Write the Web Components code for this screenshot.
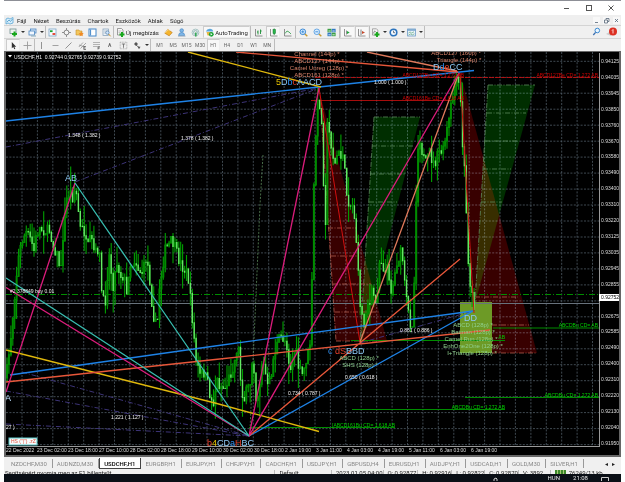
<!DOCTYPE html>
<html lang="hu">
<head>
<meta charset="utf-8">
<title>USDCHF,H1</title>
<style>
  html, body { height: 100%; margin: 0; background: #fff; }
  body { font-family: Roboto, "Liberation Sans", sans-serif; font-size: 6px; overflow: hidden; }
</style>
</head>
<body>
<trading-app></trading-app>

<script>
const define = (name, html, setup) => {
  const tpl = document.createElement('template');
  tpl.innerHTML = html;
  customElements.define(name, class extends HTMLElement {
    constructor() {
      super();
      this.attachShadow({ mode: 'open' }).append(tpl.content.cloneNode(true));
    }
    connectedCallback() {
      if (setup && !this.ready) { this.ready = true; setup(this, this.shadowRoot); }
    }
  });
};

/* Icons: 9x9 drawings */
const ICONS = {
  newchart: '<rect x="1" y="1" width="6" height="4.5" fill="#eef4ee" stroke="#6f8f8f" stroke-width=".8"/><path d="M5.5 3.5v5M3 6h5" stroke="#18a81c" stroke-width="2"/>',
  profiles: '<rect x="2.5" y="1" width="5.5" height="4" fill="#d8e8f8" stroke="#4b86c0" stroke-width=".8"/><rect x="1" y="3" width="5.5" height="4" fill="#f2f8ff" stroke="#4b86c0" stroke-width=".8"/><path d="M3 8h5" stroke="#8ab" stroke-width="1"/>',
  market: '<rect x="1" y="1" width="7" height="7" fill="#f8fcff" stroke="#79a5c8" stroke-width=".8"/><path d="M2 3.2h2.6" stroke="#15a52a" stroke-width="1.8"/><path d="M4.5 6h2.8" stroke="#e13a24" stroke-width="1.8"/>',
  cross: '<path d="M4.5 0v9M0 4.5h9" stroke="#888" stroke-width=".9"/><circle cx="4.5" cy="4.5" r="2.4" fill="#f4f4f4" stroke="#777" stroke-width=".9"/>',
  nav: '<path d="M1 2h3l.6 1H7v4H1z" fill="#f3c75d" stroke="#c89028" stroke-width=".6"/><path d="M6.2 3.5l.8 1.6 1.7.2-1.2 1.2.3 1.8-1.6-.9-1.6.9.3-1.8-1.2-1.2 1.7-.2z" fill="#f08a24"/>',
  terminal: '<rect x="1" y="1" width="7" height="7" fill="#fff" stroke="#4386c8" stroke-width="1"/><path d="M2.6 1.5v6" stroke="#4386c8" stroke-width="1"/>',
  tester: '<rect x="1" y="1" width="5.6" height="6.6" fill="#eef4fa" stroke="#7d9ab5" stroke-width=".7"/><path d="M2 3h3.500M2 5h2" stroke="#9ab" stroke-width=".6"/><circle cx="5.4" cy="4.6" r="1.7" fill="#cfe6ff" stroke="#5580a8" stroke-width=".7"/><path d="M6.600 6l2 2.300" stroke="#c89028" stroke-width="1"/>',
  order: '<path d="M1.500 .5h4l1.500 1.500v5h-5.500z" fill="#f8f8f8" stroke="#777" stroke-width=".7"/><path d="M2.500 3h3M2.500 4.600h2" stroke="#999" stroke-width=".6"/><path d="M6 4v5M3.500 6.500h5" stroke="#18a81c" stroke-width="2"/>',
  gold: '<path d="M.8 5.200l3-3.700 4.400 3-3 3.300z" fill="#f5b52e" stroke="#c27a12" stroke-width=".7"/><path d="M1.200 5l3-3.200 1.600 1" stroke="#ffe08a" fill="none" stroke-width=".8"/>',
  person: '<circle cx="4.700" cy="2.500" r="1.800" fill="#7eb6e8" stroke="#3d7fc0" stroke-width=".6"/><path d="M1.500 7.500q.3-3 3.200-3t3 3z" fill="#7eb6e8" stroke="#3d7fc0" stroke-width=".6"/><path d="M1 8.200h7.500" stroke="#9ab" stroke-width=".8"/>',
  signal: '<circle cx="4.500" cy="4.500" r="3.400" fill="none" stroke="#a8c4c4" stroke-width="1"/><circle cx="4.500" cy="4.500" r="1.900" fill="none" stroke="#7aa" stroke-width=".8"/><path d="M4.800 4.500v4" stroke="#2aa54a" stroke-width="1.400"/>',
  auto: '<path d="M.8 3.500q1-2.700 4-2.700t3.400 2.700z" fill="#5aa7dc"/><path d="M1.500 4h5.500l-1 3.500H2.500z" fill="#e7b743"/><circle cx="6.300" cy="6.300" r="2.400" fill="#17a336"/><path d="M5.600 5.100l1.900 1.200-1.900 1.200z" fill="#fff"/>',
  bars: '<path d="M1.500 1v7h7" fill="none" stroke="#777" stroke-width=".8"/><path d="M4 2.500v4M3 4h1M6.500 1.500v4.500M6.500 3h1.200" stroke="#1b8f35" stroke-width=".9"/>',
  candles: '<path d="M1.500 1v7h7" fill="none" stroke="#777" stroke-width=".8"/><path d="M5.200 .5v6.500" stroke="#0d7a2a" stroke-width=".8"/><rect x="4" y="1.600" width="2.500" height="4" fill="#29b64a" stroke="#0d7a2a" stroke-width=".5"/>',
  line: '<path d="M1.500 1v7h7" fill="none" stroke="#777" stroke-width=".8"/><path d="M2 5.500l2-2.500 2 1 2 2" fill="none" stroke="#2a9a45" stroke-width=".8"/>',
  zin: '<path d="M5.500 5.500L8.300 8.300" stroke="#c89a30" stroke-width="1.400"/><circle cx="3.800" cy="3.800" r="2.800" fill="#d7ecff" stroke="#2b7fd0" stroke-width=".9"/><path d="M3.800 2.300v3M2.300 3.800h3" stroke="#2b7fd0" stroke-width=".8"/>',
  zout: '<path d="M5.500 5.500L8.300 8.300" stroke="#c89a30" stroke-width="1.400"/><circle cx="3.800" cy="3.800" r="2.800" fill="#d7ecff" stroke="#5b9fe0" stroke-width=".9"/><path d="M2.300 3.800h3" stroke="#2b7fd0" stroke-width=".8"/>',
  tile: '<rect x=".5" y=".8" width="3.900" height="3.500" fill="#3a9f43"/><rect x="4.700" y=".8" width="3.900" height="3.500" fill="#2f78c4"/><rect x=".5" y="4.700" width="3.900" height="3.500" fill="#2f78c4"/><rect x="4.700" y="4.700" width="3.900" height="3.500" fill="#3a9f43"/><path d="M1.400 3h2.300M5.400 3h2.300M1.400 6.800h2.300M5.400 6.800h2.300" stroke="#fff" stroke-width=".8"/>',
  scroll: '<path d="M1.500 1v7h7" fill="none" stroke="#777" stroke-width=".8"/><path d="M3.500 2.500v4" stroke="#666" stroke-width=".7"/><path d="M4 3l2.700 1.500L4 6z" fill="#22a53c"/>',
  shift: '<path d="M1.500 1v7h7" fill="none" stroke="#777" stroke-width=".8"/><path d="M4 1.500v5.500" stroke="#666" stroke-width=".8"/><path d="M5 3l3 1.500-3 1.500z" fill="#c64a2d"/>',
  indi: '<path d="M1.500 .8h4l1.300 1.300v5h-5.300z" fill="#f4f4f4" stroke="#888" stroke-width=".7"/><path d="M2.300 5.500l1.300-2.500 1.300 1" fill="none" stroke="#555" stroke-width=".6"/><path d="M6 4v5M3.500 6.500h5" stroke="#18a81c" stroke-width="1.900"/>',
  clock: '<circle cx="4.500" cy="4.500" r="3.300" fill="#f5faff" stroke="#2d74bd" stroke-width="1.600"/><path d="M4.500 2.700v2h1.600" fill="none" stroke="#345" stroke-width=".7"/>',
  template: '<rect x=".6" y="1" width="7.800" height="7" fill="#eaf3fb" stroke="#6c9cc8" stroke-width=".8"/><path d="M.6 2h7.800" stroke="#6c9cc8" stroke-width="1.400"/><path d="M1.500 5l1.600-1 1.500 1L7 3.800M1.500 7l2-1 2 .8 2-1" fill="none" stroke="#4a9a6a" stroke-width=".6"/>',
  pointer: '<path d="M2.800 1v6.300l1.500-1.300 1 2.300 1-.5-1-2.100h1.900z" fill="#333"/>',
  hair: '<path d="M4.500 .5v8M.5 4.500h8" stroke="#999" stroke-width=".9"/>',
  vline: '<path d="M4.500 1v7" stroke="#888" stroke-width=".9"/>',
  hline: '<path d="M1.500 4.500h6" stroke="#999" stroke-width=".9"/>',
  trend: '<path d="M1.500 7.500L7.500 1.500" stroke="#888" stroke-width=".9"/>',
  channel: '<path d="M.8 6L5 1.500M2.500 7.500L8 2M1 4l6 2" stroke="#888" stroke-width=".7"/><path d="M5.800 5.500h2.200M5.800 5.500v3h2.200M5.800 7h1.800" fill="none" stroke="#555" stroke-width=".7"/>',
  fibo: '<path d="M1 1.500h7M1 3.500h7M1 5.500h7" stroke="#999" stroke-width=".7"/><path d="M6 8.500v-2.500h2M6 7.300h1.600" fill="none" stroke="#555" stroke-width=".7"/>',
  label: '<rect x="1.200" y="1.200" width="6.600" height="6.600" fill="none" stroke="#999" stroke-width=".7" stroke-dasharray="1 .6"/><path d="M2.800 3h3.400M4.500 3v3.800" stroke="#666" stroke-width=".8"/>',
  arrows: '<path d="M1 3l2-2 2 2-2 2zM4.500 5.500l3 .2-1.500 2.500z" fill="#555"/><path d="M3 4l3 2.500" stroke="#555" stroke-width=".8"/>',
  app: '<path d="M1 3l2-1 2 1 3-1.500v5.500l-3 1-2-1-2 1z" fill="#d7eefc" stroke="#5aa7d6" stroke-width=".8"/><path d="M2 6l2-2 1.500 1.500L7.500 3" fill="none" stroke="#4a98c8" stroke-width=".8"/>',
  find: '<circle cx="5.300" cy="3.500" r="2.300" fill="#eaf5ff" stroke="#3c8ad0" stroke-width="1"/><path d="M3.600 5.300L1.300 8" stroke="#3c6fb0" stroke-width="1.300"/>'
};

define('mt-icon', `<style>
  :host { display: inline-block; width: 9px; height: 9px; flex: none; }
  svg { display: block; width: 100%; height: 100%; overflow: visible; }
</style><svg viewBox="0 0 9 9" aria-hidden="true"></svg>`,
(el, root) => { root.querySelector('svg').innerHTML = ICONS[el.getAttribute('name')]; });

define('tool-button', `<style>
  :host { display: flex; flex: 1; min-width: 0; }
  button { flex: 1; min-width: 0; display: flex; align-items: center; justify-content: center; gap: 1px;
    margin: 0; padding: 0; border: 1px solid transparent; background: none; font: inherit; color: inherit; white-space: nowrap; }
  :host([pressed]) button { background: #f8f8f8; border-color: #ccc #eee #eee #ccc; }
  :host([menu]) button::after { content: ""; border: 1px solid transparent; border-width: 2px 2px 0; border-top-color: #333; margin-left: 2px; }
</style><button type="button"><slot></slot></button>`,
(el, root) => {
  root.querySelector('button').setAttribute('aria-label', el.getAttribute('label') || el.textContent.trim());
  if (el.hasAttribute('icon')) {
    const i = document.createElement('mt-icon');
    i.setAttribute('name', el.getAttribute('icon'));
    root.querySelector('button').prepend(i);
  }
});

define('tool-group', `<style>
  :host { display: flex; flex: none; border-right: 1px solid transparent; box-sizing: border-box; }
  :host([sep]) { border-right-color: #bdbdbd; }
</style><slot></slot>`);

define('title-bar', `<style>
  :host { display: flex; justify-content: flex-end; align-items: center; gap: 12px; height: 14px; padding-right: 5px; background: #fff; border-top: 1px solid #8d8f96; }
  button { margin: 0; padding: 0; border: 0; background: none; width: 10px; height: 10px; }
  svg { display: block; width: 10px; height: 10px; fill: none; stroke: #555; }
</style>
<button aria-label="Minimize"><svg viewBox="0 0 10 10"><path d="M2 5.500h5"/></svg></button>
<button aria-label="Maximize"><svg viewBox="0 0 10 10"><rect x="2.500" y="2.500" width="5" height="5"/></svg></button>
<button aria-label="Close"><svg viewBox="0 0 10 10"><path d="M2.500 2.500l5 5M7.500 2.500l-5 5"/></svg></button>`);

define('menu-bar', `<style>
  :host { display: flex; align-items: center; height: 10px; padding: 0 1px; background: #efefef; color: #222; }
  nav { display: flex; gap: 7px; margin-left: 3px; flex: 1; }
  button { margin: 0; padding: 0; border: 0; background: none; font: inherit; color: inherit; }
  .win { display: flex; gap: 3px; color: #567; }
  .win svg { display: block; width: 7px; height: 7px; fill: none; stroke: currentColor; stroke-width: .8; }
  .win button { background: #f8f8f8; }
</style>
<mt-icon name="app"></mt-icon>
<nav><button>Fájl</button><button>Nézet</button><button>Beszúrás</button><button>Chartok</button><button>Eszközök</button><button>Ablak</button><button>Súgó</button></nav>
<div class="win">
<button aria-label="Minimize chart"><svg viewBox="0 0 7 7"><path d="M2 5.500h3"/></svg></button>
<button aria-label="Restore chart"><svg viewBox="0 0 7 7"><path d="M3 2.500v-1h3v3h-1M1.500 3h3v3h-3z"/></svg></button>
<button aria-label="Close chart"><svg viewBox="0 0 7 7"><path d="M2 2l3 3M5 2l-3 3"/></svg></button>
</div>`);

define('main-toolbar', `<style>
  :host { display: flex; height: 12px; padding: 0 4px; background: #f0f0f0; border-top: 1px solid #d4d4d4; color: #222; }
  .grow { flex: 1; }
  .find { display: flex; align-items: center; gap: 5px; }
  .find button { display: flex; margin: 0; padding: 0; border: 0; background: none; width: 10px; height: 10px; }
  .badge svg { display: block; width: 10px; height: 10px; overflow: visible; }
</style>
<tool-group sep style="width:38px"><tool-button menu icon="newchart" label="New chart"></tool-button><tool-button menu icon="profiles" label="Profiles"></tool-button></tool-group>
<tool-group sep style="width:68px"><tool-button icon="market" label="Market watch"></tool-button><tool-button icon="cross" label="Data window"></tool-button><tool-button icon="nav" label="Navigator"></tool-button><tool-button icon="terminal" label="Terminal"></tool-button><tool-button icon="tester" label="Tester"></tool-button></tool-group>
<tool-group style="width:48px"><tool-button icon="order">Új megbízás</tool-button></tool-group>
<tool-group style="width:41px"><tool-button icon="gold" label="MetaEditor"></tool-button><tool-button icon="person" label="Account"></tool-button><tool-button icon="signal" label="Signals"></tool-button></tool-group>
<tool-group sep style="width:48px"><tool-button pressed icon="auto">AutoTrading</tool-button></tool-group>
<tool-group sep style="width:45px"><tool-button icon="bars" label="Bar chart"></tool-button><tool-button pressed icon="candles" label="Candlesticks"></tool-button><tool-button icon="line" label="Line chart"></tool-button></tool-group>
<tool-group sep style="width:44px"><tool-button icon="zin" label="Zoom in"></tool-button><tool-button icon="zout" label="Zoom out"></tool-button><tool-button icon="tile" label="Tile windows"></tool-button></tool-group>
<tool-group sep style="width:30px"><tool-button pressed icon="scroll" label="Auto scroll"></tool-button><tool-button pressed icon="shift" label="Chart shift"></tool-button></tool-group>
<tool-group sep style="width:55px"><tool-button menu icon="indi" label="Indicators"></tool-button><tool-button menu icon="clock" label="Periods"></tool-button><tool-button menu icon="template" label="Templates"></tool-button></tool-group>
<span class="grow"></span>
<div class="find"><button aria-label="Search"><mt-icon name="find"></mt-icon></button>
<button class="badge" aria-label="Notifications"><svg viewBox="0 0 10 10"><path d="M-1 7l5-3v5z" fill="#ccc"/><circle cx="6" cy="4.500" r="4" fill="#dc2f22"/><path d="M6 2.500v4M5 3.500l1-1" stroke="#fff" stroke-width=".8" fill="none"/></svg></button></div>`);

define('draw-toolbar', `<style>
  :host { display: flex; height: 12px; padding: 0 2px; background: #f0f0f0; border-top: 1px solid #d4d4d4; color: #666; font-size: 5px; }
</style>
<tool-group sep style="width:29px"><tool-button pressed icon="pointer" label="Cursor"></tool-button><tool-button icon="hair" label="Crosshair"></tool-button></tool-group>
<tool-group style="width:96px"><tool-button icon="vline" label="Vertical line"></tool-button><tool-button icon="hline" label="Horizontal line"></tool-button><tool-button icon="trend" label="Trendline"></tool-button><tool-button icon="channel" label="Channel"></tool-button><tool-button icon="fibo" label="Fibonacci"></tool-button><tool-button style="font-weight:700">A</tool-button><tool-button icon="label" label="Text label"></tool-button></tool-group>
<tool-group sep style="width:20px"><tool-button menu icon="arrows" label="Arrows"></tool-button></tool-group>
<tool-group sep style="width:122px;margin-left:2px"><tool-button>M1</tool-button><tool-button>M5</tool-button><tool-button>M15</tool-button><tool-button>M30</tool-button><tool-button pressed>H1</tool-button><tool-button>H4</tool-button><tool-button>D1</tool-button><tool-button>W1</tool-button><tool-button>MN</tool-button></tool-group>`);

/* Chart plot: free canvas in user units, 593 x 394 */
define('price-plot', `<style>
  :host { display: block; min-width: 0; min-height: 0; box-shadow: 1px 1px 0 #9a9a9a; font-family: "Liberation Sans", Arial, sans-serif; }
  svg { display: block; width: 100%; height: 100%; }
  path, line { fill: none; }
  #grid { stroke: #5a6874; stroke-width: .7; stroke-dasharray: 2 1.400; }
  .blue { stroke: #1e82e6; } .pink { stroke: #dc1c7c; } .teal { stroke: #38bdb0; } .gold { stroke: #e0b80c; }
  .orange { stroke: #e8573a; } .salmon { stroke: #e07a5c; } .red { stroke: #d01010; } .green { stroke: #008c00; }
  .violet { stroke: #3d3478; stroke-dasharray: 5 2 1 2; }
  .gd { stroke: #5c8a5c; stroke-width: .8; stroke-dasharray: 5 1.500 1 1.500; }
  .rd { stroke: #b05a4c; stroke-width: .8; stroke-dasharray: 5 1.500 1 1.500; }
  .dots { stroke-dasharray: 2 1.500; }
  .zone { mix-blend-mode: screen; }
  .ratio { fill: #f0f0f0; font-size: 5px; }
  .sal { fill: #d9836a; font-size: 6px; text-anchor: middle; }
  .grn { fill: #8fcf8f; font-size: 6px; text-anchor: middle; }
  .lvl { fill: #00d000; font-size: 5px; text-anchor: end; }
  .lvr { fill: #d00000; font-size: 5px; text-anchor: end; }
  .pt { font-size: 9px; fill: #8cc8f4; }
  .r { fill: #e8402c; } .y { fill: #e8c400; } .b { fill: #2f8ff0; } .w { fill: #bfe0ff; }
</style>
<svg viewBox="6 52 593 394" preserveAspectRatio="xMinYMin meet">
  <g id="grid"></g>
  <polygon class="zone" points="319,90 336,341 387,341" fill="#380000"/>
  <polygon class="zone" points="374,117 420,117 362,342 360,342" fill="#002e00"/>
  <polygon class="zone" points="461,76 475,353 537,353" fill="#380000"/>
  <polygon class="zone" points="488,85 535,85 475,303" fill="#002e00"/>
  <rect x="460" y="302" width="32" height="51" fill="#6d9a26"/>
  <path class="gd" d="M374 117H420M372 146H413M370 174H405M369 202H397M374 117L360 342M488 85H535M487 113H526M485 141H518M483 169H511M481 202H502M488 85L475 303"/>
  <path class="rd" d="M328 228H357M331 256H359M333 284H371M335 312H379M336 341H387M321 110L336 341M475 297H518M492 325H529M492 353H537"/>
  <path class="gd dots" d="M263 155L260 205L250 430"/>
  <path class="violet" d="M6 147L319 88M75 182L319 88M6 391L249 436M22 372L249 436M6 424L249 436M360 343L473 311"/>
  <line x1="6" x2="599" y1="294.500" y2="294.500" class="green" stroke-dasharray="6 2 1 2"/>
  <line x1="6" x2="599" y1="303.500" y2="303.500" stroke="#68727c"/>
  <path class="green" d="M351 340.500H505M493 328H599M465 397.500H599M352 409.500H505M249 427.500H395"/>
  <path class="red" stroke-opacity=".8" d="M315 77.500H599" stroke-dasharray="5 1"/>
  <path class="red" d="M311 100.500H455" stroke-opacity=".8"/>
  <g id="candles"></g>
  <path class="red" d="M319 88L336 195L360 342M460 73L467 195L474 313"/>
  <g stroke-width="1.300">
    <path class="blue" d="M6 121L160 104L319 87L474 70.500M10 375L215 346L473 311M249 436L473 311"/>
    <path class="gold" d="M188 52L321 87M6 350L215 403L319 431.500"/>
    <path class="orange" d="M236 52L458 72M6 382L215 359.500L490 330M249 436L460 259"/>
    <path class="salmon" d="M367 52L457 71M360 342L459 73"/>
    <path class="pink" d="M6 392L75 183M6 287.500L249 436L319 88M249 436L459 73"/>
    <path class="teal" d="M75 183L158 304L249 436L6 278"/>
  </g>
  <text class="ratio" x="68" y="137">1.348 ( 1.382 )</text>
  <text class="ratio" x="181" y="140">1.378 ( 1.382 )</text>
  <text class="ratio" x="374" y="84">1.000 ( 1.000 )</text>
  <text class="ratio" x="111" y="419">1.221 ( 1.127 )</text>
  <text class="ratio" x="6" y="429">27 )</text>
  <text class="ratio" x="288" y="395">0.734 ( 0.787 )</text>
  <text class="ratio" x="345" y="379">0.650 ( 0.618 )</text>
  <text class="ratio" x="400" y="332">0.861 ( 0.886 )</text>
  <text class="ratio" x="10" y="293">#2 378849 buy 0.01</text>
  <path d="M8 55h4l-2 2.500z" style="fill:#fff"/>
  <text class="ratio" x="14" y="59">USDCHF,H1&#160; 0.92744 0.92765 0.92739 0.92752</text>
  <text class="sal" x="317" y="56">Channel (144p) *</text>
  <text class="sal" x="319" y="63">ABCD127 (144p) *</text>
  <text class="sal" x="319" y="70">Camel Unreg (128p) *</text>
  <text class="sal" x="319" y="77">ABCD161 (128p) *</text>
  <text class="sal" x="456" y="55">ABCD127 (160p) *</text>
  <text class="sal" x="459" y="62">Triangle (144p) *</text>
  <text class="lvr" x="464" y="77">ABCD127Be CD= 1.272 AB</text>
  <text class="lvr" x="464" y="100">ABCD161Be CD= 1.618 AB</text>
  <text class="lvr" x="598" y="77">ABCD127Be CD= 1.272 AB</text>
  <text class="lvl" x="598" y="327">ABCDBu CD= AB</text>
  <text class="lvl" x="505" y="339">AB</text>
  <text class="lvl" x="598" y="397">ABCDBu CD= 1.272 AB</text>
  <text class="lvl" x="505" y="409">ABCDBu CD= 1.272 AB</text>
  <text class="lvl" x="395" y="427">[ABCD161Bu CD= 1.618 AB</text>
  <text class="grn" x="359" y="360">ABCD (128p) *</text>
  <text class="grn" x="360" y="367">SHS (128p) *</text>
  <text class="grn" x="473" y="327">ABCD (128p) *</text>
  <text class="grn" x="473" y="334">Batman (128p) *</text>
  <text class="grn" x="471" y="341">Camel Run (128p) *</text>
  <text class="grn" x="473" y="348">EnhOne2One (128p) *</text>
  <text class="grn" x="472" y="355">I+Triangle (128p) *</text>
  <text class="pt" x="65" y="181">AB</text>
  <text class="pt" x="276" y="85"><tspan class="y">5</tspan>D<tspan class="b">b</tspan><tspan class="r">c</tspan>AACD</text>
  <text class="pt" x="433" y="70">D<tspan class="b">d</tspan><tspan class="r">e</tspan>CC</text>
  <text class="pt" x="464" y="321">DD</text>
  <text class="pt" x="328" y="354"><tspan class="b">c</tspan><tspan class="r"> dS</tspan>BBD</text>
  <text class="pt" x="207" y="446"><tspan class="r">b</tspan><tspan class="y">4</tspan>CD<tspan class="b">a</tspan><tspan class="r">H</tspan>BC</text>
  <text class="pt w" x="5" y="401">A</text>
  <rect x="9" y="438" width="28" height="7" fill="#f6fbfb" stroke="#5cc8c8"/>
  <text x="11" y="443" font-size="5" style="fill:#e0503c">HS (&quot;|&quot;) .zZ</text>
</svg>`,
(el, root) => {
  let d = '';
  for (let k = 0; k < 38; k++) d += `M${(22 + 15.42 * k).toFixed(1)} 52V446`;
  for (let k = 0; k < 25; k++) d += `M6 ${(61.3 + 15.97 * k).toFixed(1)}H599`;
  root.getElementById('grid').innerHTML = `<path d="${d}"/>`;

  const track = [5,385,7,370,10,345,13,313,16,280,18,260,22,240,26,232,31,240,34,250,37,232,40,228,48,231,50,229,53,245,56,250,59,262,61,270,63,235,65,215,67,197,70,191,73,197,75,188,77,196,80,228,84,230,87,250,91,238,95,255,99,245,102,298,105,305,109,253,113,285,117,262,121,275,124,275,127,298,129,265,132,265,135,258,139,270,143,272,146,258,149,270,151,295,154,318,157,330,159,290,165,250,172,240,180,262,188,275,193,325,196,360,200,375,204,372,207,380,210,395,213,405,217,380,220,385,225,388,230,375,235,360,238,340,241,385,244,400,247,390,250,385,253,350,256,398,259,390,262,360,265,370,268,390,271,375,274,355,277,345,280,337,284,338,287,345,290,370,294,350,297,355,299,370,303,375,306,360,309,350,311,335,312,280,314,180,315,150,317,110,319,95,322,130,324,195,326,228,327,125,330,135,333,155,335,165,338,150,340,160,343,150,346,190,350,205,353,205,355,220,357,250,359,290,361,310,364,325,367,300,370,305,373,285,375,310,378,280,380,255,383,265,386,275,388,265,391,290,394,280,397,260,400,255,402,250,405,290,408,310,411,325,413,320,415,260,416,200,418,150,419,130,421,145,424,160,427,165,430,150,433,165,436,160,440,150,443,152,446,135,449,120,452,100,455,85,458,80,460,90,462,140,464,160,466,200,467,240,469,270,471,290,473,300,475,308];
  let seed = 7, i = 0;
  const rnd = () => (seed = (seed * 16807) % 2147483647) / 2147483647;
  const at = x => {
    while (i < track.length - 4 && track[i + 2] < x) i += 2;
    const t = (x - track[i]) / (track[i + 2] - track[i]);
    return track[i + 1] + t * (track[i + 3] - track[i + 1]);
  };
  let open = at(6), wick = '', up = '', down = '';
  for (let x = 7; x < 475; x += 1.93) {
    const close = at(x) + (rnd() - .5) * 12;
    const hi = Math.min(open, close), lo = Math.max(open, close);
    const p = x.toFixed(1);
    wick += `M${p} ${(hi - rnd() * rnd() * 24).toFixed(1)}V${(lo + rnd() * rnd() * 24).toFixed(1)}`;
    const body = `M${p} ${hi.toFixed(1)}V${(lo + 1).toFixed(1)}`;
    if (close < open) up += body; else down += body;
    open = close;
  }
  root.getElementById('candles').innerHTML =
    `<path d="${wick}" stroke="#00a000" stroke-width="1.100"/><path d="${up}" stroke="#008c00" stroke-width="2"/><path d="${down}" stroke="#64ea64" stroke-width="1.400"/>`;
});

define('price-axis', `<style>
  :host { display: flex; flex-direction: column; justify-content: space-between; padding: 6px 0 0 2px; color: #ddd; font: 5px/6px "Liberation Sans", Arial, sans-serif; }
  span { display: block; white-space: nowrap; }
  .now { background: #fff; color: #000; margin: -3px 0 2px -2px; padding-left: 2px; line-height: 7px; }
</style>`,
(el, root) => {
  '94125 94035 93945 93850 93760 93670 93580 93490 93400 93310 93220 93125 93035 92945 92855 92752 92675 92585 92490 92400 92310 92220 92130 92040 91950'.split(' ').forEach(v => {
    const s = document.createElement('span');
    s.textContent = '0.' + v;
    if (v === '92752') s.className = 'now';
    root.append(s);
  });
});

define('time-axis', `<style>
  :host { display: grid; grid-template-columns: repeat(16, minmax(0, 31fr)) minmax(0, 97fr); color: #ddd; font: 5px/9px "Liberation Sans", Arial, sans-serif; }
  span { white-space: nowrap; }
</style>`,
(el, root) => {
  ['22 Dec 2022','23 Dec 02:00','23 Dec 18:00','27 Dec 10:00','28 Dec 02:00','28 Dec 18:00','29 Dec 10:00','30 Dec 02:00','30 Dec 18:00','2 Jan 19:00','3 Jan 11:00','4 Jan 03:00','4 Jan 19:00','5 Jan 11:00','6 Jan 03:00','6 Jan 19:00'].forEach(v => {
    const s = document.createElement('span');
    s.textContent = v;
    root.append(s);
  });
});

define('chart-window', `<style>
  :host { display: grid; grid-template: minmax(0, 1fr) 9px / minmax(0, 1fr) 20px; background: #000; border: solid #666; border-width: 1px 2px 2px 2px; }
</style><price-plot></price-plot><price-axis></price-axis><time-axis></time-axis>`);

define('chart-tabs', `<style>
  :host { display: flex; align-items: center; height: 13px; padding: 0 4px 0 3px; background: #f0f0f0; color: #888; }
  button { margin: 0; padding: 0 5px 0 4px; height: 9px; border: 0; border-right: 1px solid #999; background: none; font: inherit; color: inherit; white-space: nowrap; }
  button.on { background: #fff; color: #000; border: 1px solid #444; border-top: 0; height: 11px; font-weight: 500; }
  .grow { flex: 1; }
  button.arr { border: 0; color: #222; padding: 0 2px; }
</style>`,
(el, root) => {
  ['NZDCHF,M30','AUDNZD,M30','USDCHF,H1','EURGBP,H1','EURJPY,H1','CHFJPY,H1','CADCHF,H1','USDJPY,H1','GBPUSD,H4','EURUSD,H1','AUDJPY,H1','USDCAD,H1','GOLD,M30','SILVER,H1'].forEach(v => {
    const b = document.createElement('button');
    b.textContent = v;
    if (v === 'USDCHF,H1') b.className = 'on';
    root.append(b);
  });
  root.append(Object.assign(document.createElement('span'), { className: 'grow' }));
  ['◂', '▸'].forEach((v, n) => {
    const b = document.createElement('button');
    b.className = 'arr'; b.textContent = v; b.setAttribute('aria-label', n ? 'Next' : 'Previous');
    root.append(b);
  });
});

define('status-bar', `<style>
  :host { display: grid; grid-template-columns: 273fr 57fr 48fr 35fr 34fr 33fr 33fr 32fr 72fr; height: 4px; overflow: hidden; background: #f0f0f0; color: #222; line-height: 6px; }
  span { padding-left: 1px; white-space: nowrap; }
  span + span { border-left: 1px solid #bbb; padding-left: 4px; }
  i { display: inline-block; width: 11px; height: 6px; margin-right: 3px; vertical-align: top; background: repeating-linear-gradient(90deg, #3d8a2a 0 2px, #a9c97a 2px 3px); }
</style><span>Segítségért nyomja meg az F1 billentyűt</span><span>Default</span><span>2023.01.05 04:00</span><span>O: 0.92877</span><span>H: 0.92916</span><span>L: 0.92822</span><span>C: 0.92870</span><span>V: 3892</span><span><i></i>76249/13 kb</span>`);

define('task-bar', `<style>
  :host { display: flex; justify-content: flex-end; align-items: flex-start; gap: 13px; height: 8px; padding-right: 12px; overflow: hidden; background: #0a0f16; color: #e8e8e8; line-height: 8px; }
  svg { display: block; width: 8px; height: 7px; fill: none; stroke: #ccc; }
</style><svg viewBox="0 0 8 7" style="margin-right:34px"><path d="M1 7V5l2-1 1 1v2"/></svg><span>HUN</span><span>21:08</span><svg viewBox="0 0 8 7"><path d="M.5 7V3.500h7V7"/></svg>`);

define('trading-app', `<style>
  :host { display: grid; grid-template-rows: auto auto auto auto minmax(0, 1fr) auto auto auto; height: 100vh; margin: 0 4px; }
</style>
<title-bar></title-bar><menu-bar></menu-bar><main-toolbar></main-toolbar><draw-toolbar></draw-toolbar>
<chart-window></chart-window>
<chart-tabs></chart-tabs><status-bar></status-bar><task-bar></task-bar>`);
</script>
</body>
</html>
